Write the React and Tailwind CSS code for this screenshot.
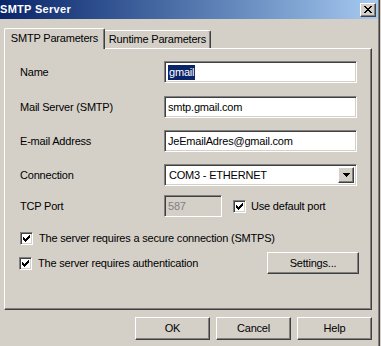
import React from "react";

const sunken =
  "border-t border-l border-t-[#808080] border-l-[#808080] border-b border-r border-b-white border-r-white shadow-[inset_1px_1px_0_#404040,inset_-1px_-1px_0_#d4d0c8]";
const raised =
  "border-t border-l border-t-white border-l-white border-b border-r border-b-[#404040] border-r-[#404040] shadow-[inset_-1px_-1px_0_#808080]";

function Check() {
  const px = [
    [6, 0],
    [5, 1], [6, 1],
    [0, 2], [4, 2], [5, 2], [6, 2],
    [0, 3], [1, 3], [3, 3], [4, 3], [5, 3],
    [0, 4], [1, 4], [2, 4], [3, 4], [4, 4],
    [1, 5], [2, 5], [3, 5],
    [2, 6],
  ];
  return (
    <svg width="7" height="7" viewBox="0 0 7 7" shapeRendering="crispEdges">
      {px.map(([x, y], i) => (
        <rect key={i} x={x} y={y} width="1" height="1" fill="#000" />
      ))}
    </svg>
  );
}

function CheckBox({ className = "" }) {
  return (
    <div className={`w-[13px] h-[13px] bg-white flex items-center justify-center shrink-0 ${sunken} ${className}`}>
      <Check />
    </div>
  );
}

function CloseGlyph() {
  const rows = [
    "XX....XX",
    ".XX..XX.",
    "..XXXX..",
    "...XX...",
    "..XXXX..",
    ".XX..XX.",
    "XX....XX",
  ];
  const rects = [];
  rows.forEach((r, y) =>
    r.split("").forEach((c, x) => {
      if (c === "X") rects.push(<rect key={`${x}-${y}`} x={x} y={y} width="1" height="1" fill="#000" />);
    })
  );
  return (
    <svg width="8" height="7" viewBox="0 0 8 7" shapeRendering="crispEdges">
      {rects}
    </svg>
  );
}

function Arrow() {
  return (
    <svg width="7" height="4" viewBox="0 0 7 4" shapeRendering="crispEdges">
      <rect x="0" y="0" width="7" height="1" fill="#000" />
      <rect x="1" y="1" width="5" height="1" fill="#000" />
      <rect x="2" y="2" width="3" height="1" fill="#000" />
      <rect x="3" y="3" width="1" height="1" fill="#000" />
    </svg>
  );
}

function Button({ children, className = "" }) {
  return (
    <div className={`bg-[#d4d0c8] flex items-center justify-center ${raised} ${className}`}>
      {children}
    </div>
  );
}

function Row({ label, children, className = "" }) {
  return (
    <div className={`flex items-center h-[22px] ${className}`}>
      <div className="w-[144px]">{label}</div>
      {children}
    </div>
  );
}

export default function App() {
  return (
    <div
      className="w-[381px] h-[346px] bg-[#d4d0c8] flex overflow-hidden text-[11px] tracking-[-0.2px] text-black leading-none"
      style={{ fontFamily: '"Liberation Sans", Arial, sans-serif' }}
    >
      <div className="w-[378px] flex flex-col">
        {/* title bar */}
        <div className="h-[19px] bg-linear-to-r from-[#0a246a] to-[#a6caf0] flex items-center justify-between pr-[2px]">
          <span className="text-white font-bold text-[11px] tracking-[0.3px]">SMTP Server</span>
          <div className={`w-[16px] h-[14px] bg-[#d4d0c8] flex items-center justify-center ${raised}`}>
            <CloseGlyph />
          </div>
        </div>

        {/* tabs */}
        <div className="flex items-end pl-[4px] pt-[9px] -mb-px">
          <div className="relative z-10 h-[21px] w-[101px] bg-[#d4d0c8] border-t border-l border-t-white border-l-white border-r border-r-[#404040] shadow-[inset_-1px_0_0_#808080] rounded-tl-[2px] rounded-tr-[2px] flex items-center justify-center pb-[2px]">
            SMTP Parameters
          </div>
          <div className="h-[19px] w-[106px] border-t border-t-white border-r border-r-[#404040] shadow-[inset_-1px_0_0_#808080] rounded-tr-[2px] flex items-center justify-center pb-px">
            Runtime Parameters
          </div>
        </div>

        {/* panel */}
        <div className="ml-[4px] w-[368px] h-[262px] border-t border-l border-t-white border-l-white border-b border-r border-b-[#404040] border-r-[#404040] shadow-[inset_-1px_-1px_0_#808080] flex flex-col pl-[15px]">
          <Row label="Name" className="mt-[12px]">
            <div className={`w-[193px] h-[22px] bg-white flex items-center pl-[3px] ${sunken}`}>
              <span className="bg-[#0a246a] text-white leading-[15px] px-px">gmail</span>
            </div>
          </Row>
          <Row label="Mail Server (SMTP)" className="mt-[13px]">
            <div className={`w-[193px] h-[22px] bg-white flex items-center pl-[3px] ${sunken}`}>
              smtp.gmail.com
            </div>
          </Row>
          <Row label="E-mail Address" className="mt-[12px]">
            <div className={`w-[193px] h-[22px] bg-white flex items-center pl-[3px] ${sunken}`}>
              JeEmailAdres@gmail.com
            </div>
          </Row>
          <Row label="Connection" className="mt-[12px]">
            <div className={`w-[193px] h-[22px] bg-white flex items-center justify-between pl-[3px] pr-[2px] ${sunken}`}>
              <span className="pl-px">COM3 - ETHERNET</span>
              <div className={`w-[16px] h-[16px] bg-[#d4d0c8] flex items-center justify-center ${raised}`}>
                <Arrow />
              </div>
            </div>
          </Row>
          <Row label="TCP Port" className="mt-[9px]">
            <div className={`w-[58px] h-[22px] bg-[#d4d0c8] flex items-center pl-[3px] text-[#808080] ${sunken}`}>
              587
            </div>
            <div className="flex items-center ml-[11px]">
              <CheckBox />
              <span className="ml-[5px]">Use default port</span>
            </div>
          </Row>
          <div className="flex items-center mt-[15px] h-[13px]">
            <CheckBox />
            <span className="ml-[6px]">The server requires a secure connection (SMTPS)</span>
          </div>
          <div className="flex items-center mt-[7px] h-[22px]">
            <CheckBox className="-ml-px" />
            <span className="ml-[6px] flex-1">The server requires authentication</span>
            <Button className="w-[92px] h-[22px] mr-[12px]">Settings...</Button>
          </div>
        </div>

        {/* bottom buttons */}
        <div className="flex justify-end gap-[6px] pr-[6px] mt-[7px]">
          <Button className="w-[75px] h-[23px]">OK</Button>
          <Button className="w-[75px] h-[23px]">Cancel</Button>
          <Button className="w-[75px] h-[23px]">Help</Button>
        </div>
      </div>
      <div className="w-[3px] h-full flex">
        <div className="w-px bg-[#808080]" />
        <div className="w-px bg-[#404040]" />
        <div className="w-px bg-[#d4d0c8]" />
      </div>
    </div>
  );
}
